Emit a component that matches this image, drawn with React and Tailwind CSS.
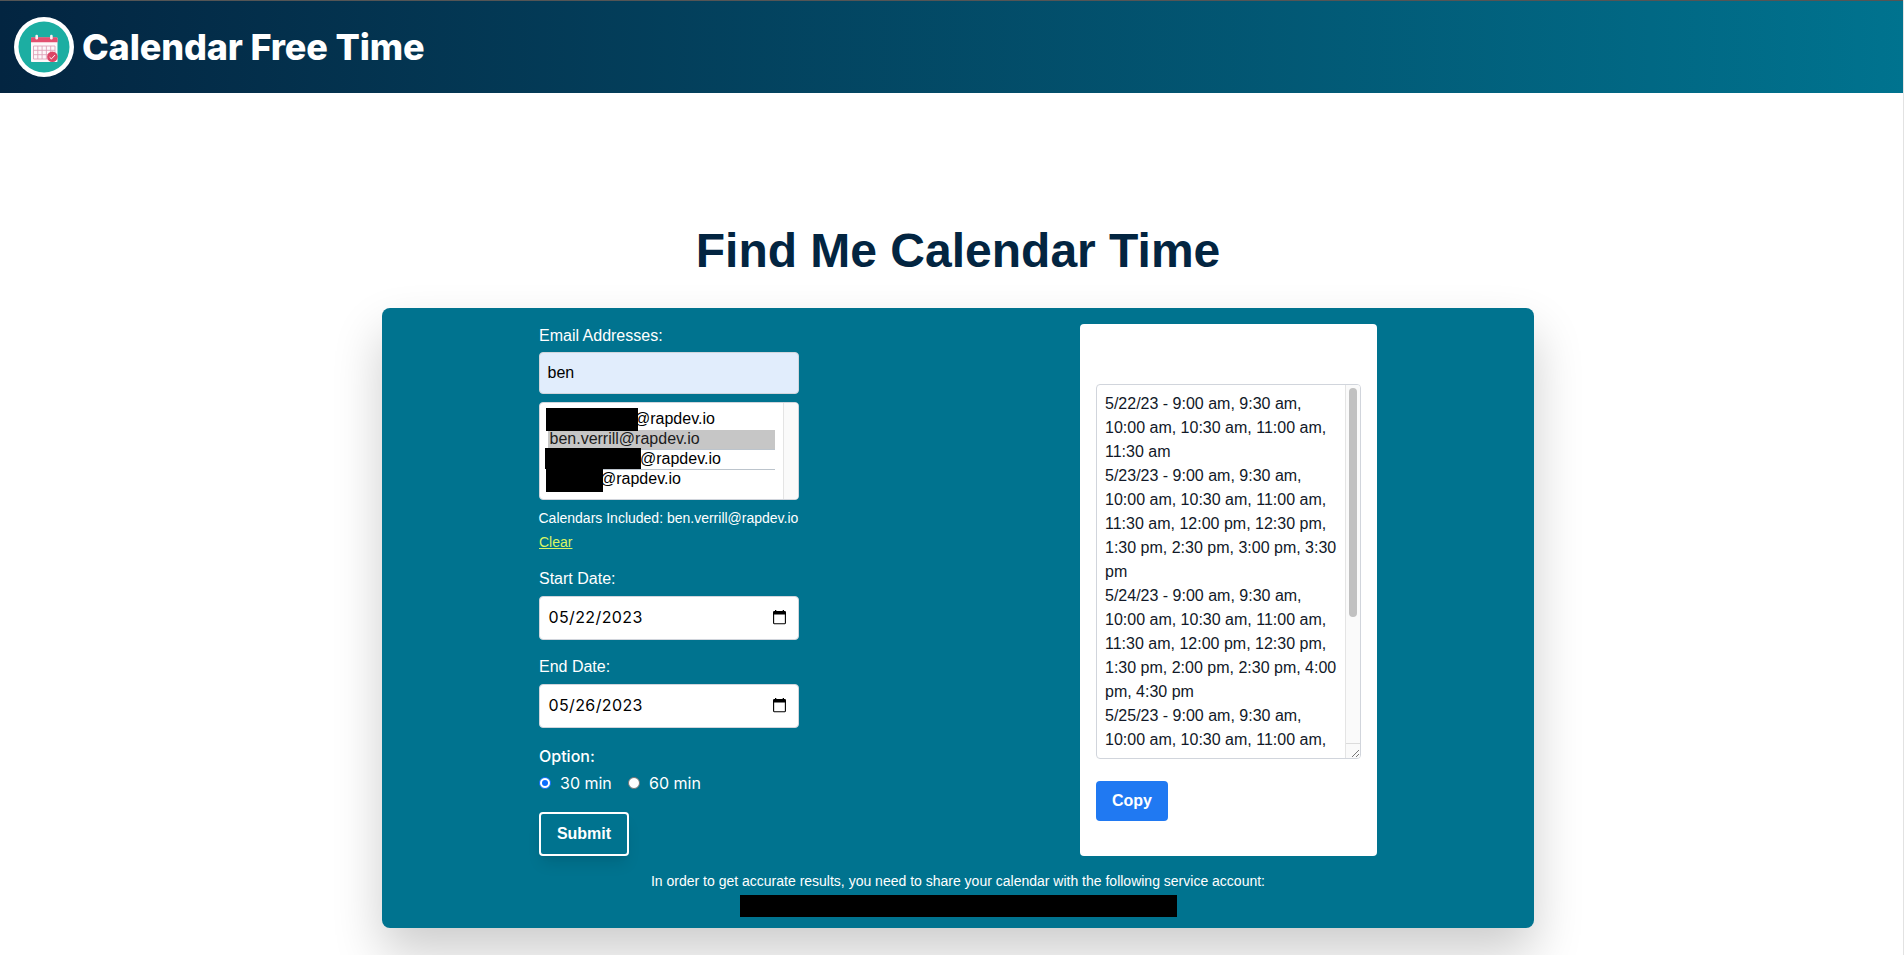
const emails = [
  { mask: 'w-[92px] h-[23px] -mt-[2px] -ml-[2px]', text: '@rapdev.io', pad: '-ml-[4px]' },
  { text: 'ben.verrill@rapdev.io', selected: true },
  { mask: 'w-[96px] h-[21px] -mt-[2px] -ml-[3px]', text: '@rapdev.io', pad: '-ml-px' },
  { mask: 'w-[57px] h-[23px] -mt-px -ml-[2px]', text: '@rapdev.io', pad: '-ml-[3px]' },
];

const times = [
  '5/22/23 - 9:00 am, 9:30 am,',
  '10:00 am, 10:30 am, 11:00 am,',
  '11:30 am',
  '5/23/23 - 9:00 am, 9:30 am,',
  '10:00 am, 10:30 am, 11:00 am,',
  '11:30 am, 12:00 pm, 12:30 pm,',
  '1:30 pm, 2:30 pm, 3:00 pm, 3:30',
  'pm',
  '5/24/23 - 9:00 am, 9:30 am,',
  '10:00 am, 10:30 am, 11:00 am,',
  '11:30 am, 12:00 pm, 12:30 pm,',
  '1:30 pm, 2:00 pm, 2:30 pm, 4:00',
  'pm, 4:30 pm',
  '5/25/23 - 9:00 am, 9:30 am,',
  '10:00 am, 10:30 am, 11:00 am,',
];

function Logo() {
  return (
    <svg viewBox="0 0 60 60" className="h-[60px] w-[60px] shrink-0">
      <circle cx="30" cy="30" r="30" fill="#fff" />
      <circle cx="30" cy="30" r="25.5" fill="#1caea2" />
      <rect x="17" y="20.5" width="26.5" height="24.5" rx="0.8" fill="#fdf8fa" />
      <path d="M17 25.2v-3.7a1.2 1.2 0 0 1 1.2-1.2h24.2a1.2 1.2 0 0 1 1.2 1.2v3.7z" fill="#e2506f" />
      <rect x="21.4" y="17.8" width="2.6" height="4.6" rx="1.2" fill="#fbf1f4" />
      <rect x="36.1" y="17.8" width="2.6" height="4.6" rx="1.2" fill="#fbf1f4" />
      <path d="M19.5 29h21.5v13h-21.5zM19.5 33.3h21.5M19.5 37.7h21.5M23.8 29v13M28.1 29v13M32.4 29v13M36.7 29v13" fill="none" stroke="#dfa3b8" strokeWidth="0.9" />
      <circle cx="38.4" cy="39.8" r="5.3" fill="#dd4566" />
      <path d="M35.6 40.2l1.8 1.7 3.6-3.8" fill="none" stroke="#fff" strokeWidth="1" />
    </svg>
  );
}

function CalendarIcon() {
  return (
    <svg viewBox="0 0 13 15" className="h-[15px] w-[13px]">
      <path d="M0.6 3.2v9.9q0 .6.6.6h10.6q.6 0 .6-.6V3.2z" fill="none" stroke="#000" strokeWidth="1.1" />
      <path d="M0 2.2Q0 1 1.2 1h10.6Q13 1 13 2.2V4.5H0z" fill="#000" />
      <path d="M2 0h1.3v2H2zM9.7 0H11v2H9.7z" fill="#000" />
    </svg>
  );
}

function DateField({ label, value }) {
  return (
    <div className="flex flex-col">
      <label className="h-6 leading-6">{label}</label>
      <div className="mt-[5px] flex h-11 items-center justify-between rounded border border-gray-300 bg-white pr-[12px] pb-[2px] pl-[8.5px] text-black">
        <span className="font-[Inter,sans-serif] text-[16px] tracking-[0.38px]">{value}</span>
        <CalendarIcon />
      </div>
    </div>
  );
}

export default function App() {
  return (
    <div className="flex h-[955px] w-full flex-col overflow-hidden border-r border-[#e2e2e2] bg-white font-['Liberation_Sans',Arial,sans-serif] text-[16px]">
      <header className="-mr-px flex h-[93px] shrink-0 items-center border-t border-[#555] bg-linear-to-r from-[#032541] to-[#00738f] pl-[14px]">
        <Logo />
        <h1 className="ml-2 font-[Inter,sans-serif] text-[36px] font-extrabold tracking-[-0.15px] whitespace-nowrap text-white">Calendar Free Time</h1>
      </header>

      <main className="flex flex-col items-center pt-[128px] pl-[13px]">
        <h2 className="h-[60px] text-[48px] leading-[60px] font-bold whitespace-nowrap text-[#032541]">Find Me Calendar Time</h2>

        <section className="mt-[27px] flex h-[620px] w-6xl flex-col rounded-lg bg-[#00738f] px-[157px] pt-4 text-white shadow-[0_25px_50px_0_rgba(0,0,0,0.2)]">
          <div className="flex h-[532px] justify-between">
            <form className="flex w-[260px] flex-col">
              <label className="h-6 leading-6">Email Addresses:</label>
              <div className="mt-1 flex h-[42px] items-center rounded border border-gray-300 bg-[#e1edfc] px-[7.5px] text-black">ben</div>

              <div className="mt-2 flex h-[98px] shrink-0 overflow-hidden rounded border border-gray-300 bg-white text-black">
                <ul className="ml-2 w-[227px] pt-[7px]">
                  {emails.map((e, i) => (
                    <li
                      key={i}
                      className={
                        'flex h-5 border-b leading-[18px] ' +
                        (e.selected ? 'border-[#bcc4cc] bg-[#c6c6c6] pl-[1.5px] text-[#1c1c1c]' : i === 2 ? 'border-[#bcc4cc]' : 'border-transparent')
                      }
                    >
                      {e.mask && <span className={'relative z-10 shrink-0 bg-black ' + e.mask} />}
                      <span className={e.pad}>{e.text}</span>
                    </li>
                  ))}
                </ul>
                <div className="ml-auto w-[15px] border-l border-[#e4e4e4] bg-[#fafafa]" />
              </div>

              <p className="mt-[6px] -ml-[0.5px] h-6 text-[14px] leading-6 whitespace-nowrap">Calendars Included: ben.verrill@rapdev.io</p>
              <a className="h-6 text-[14px] leading-6 text-[#d9f564] underline">Clear</a>

              <div className="mt-[13px] flex flex-col gap-[15px]">
                <DateField label="Start Date:" value="05/22/2023" />
                <DateField label="End Date:" value="05/26/2023" />
              </div>

              <div className="mt-4 h-6 font-[Inter,sans-serif] leading-6 font-medium">Option:</div>
              <div className="mt-[3px] flex h-6 items-center font-[Inter,sans-serif]">
                <span className="flex h-3 w-3 items-center justify-center rounded-full border-[1.5px] border-[#0a6cff] bg-white">
                  <span className="h-[6px] w-[6px] rounded-full bg-[#0a6cff]" />
                </span>
                <span className="ml-[9px] w-[52px]">30 min</span>
                <span className="ml-4 h-3 w-3 rounded-full border border-[#767676] bg-white" />
                <span className="ml-[9px]">60 min</span>
              </div>

              <button className="mt-[17px] flex h-11 w-[90px] items-center justify-center rounded border-2 border-white pb-px font-bold shadow-lg">Submit</button>
            </form>

            <aside className="flex w-[297px] flex-col rounded bg-white px-4 pt-[60px]">
              <div className="flex h-[375px] w-[265px] overflow-hidden rounded border border-gray-300 text-[#111827]">
                <div className="pt-[7px] pl-2">
                  {times.map((t, i) => (
                    <div key={i} className="h-6 leading-6 whitespace-nowrap">{t}</div>
                  ))}
                </div>
                <div className="ml-auto flex w-[15px] shrink-0 flex-col border-l border-[#e4e4e4] bg-[#fafafa]">
                  <div className="mt-[3px] ml-[3px] h-[229px] w-2 rounded-full bg-[#c1c1c1]" />
                  <div className="mt-auto flex h-[15px] items-end justify-end border-t border-[#dcdcdc]">
                    <svg viewBox="0 0 9 9" className="h-[9px] w-[9px]">
                      <path d="M1 8L8 1M5 8L8 5" stroke="#555" strokeWidth="0.8" fill="none" />
                    </svg>
                  </div>
                </div>
              </div>
              <button className="mt-[22px] h-10 w-[72px] rounded bg-[#2079f2] pb-px font-bold text-white">Copy</button>
            </aside>
          </div>

          <div className="flex flex-col items-center pt-[13px]">
            <p className="h-6 text-[14px] leading-6 whitespace-nowrap">In order to get accurate results, you need to share your calendar with the following service account:</p>
            <div className="mt-[2px] ml-px h-[22px] w-[437px] bg-black" />
          </div>
        </section>
      </main>
    </div>
  );
}
